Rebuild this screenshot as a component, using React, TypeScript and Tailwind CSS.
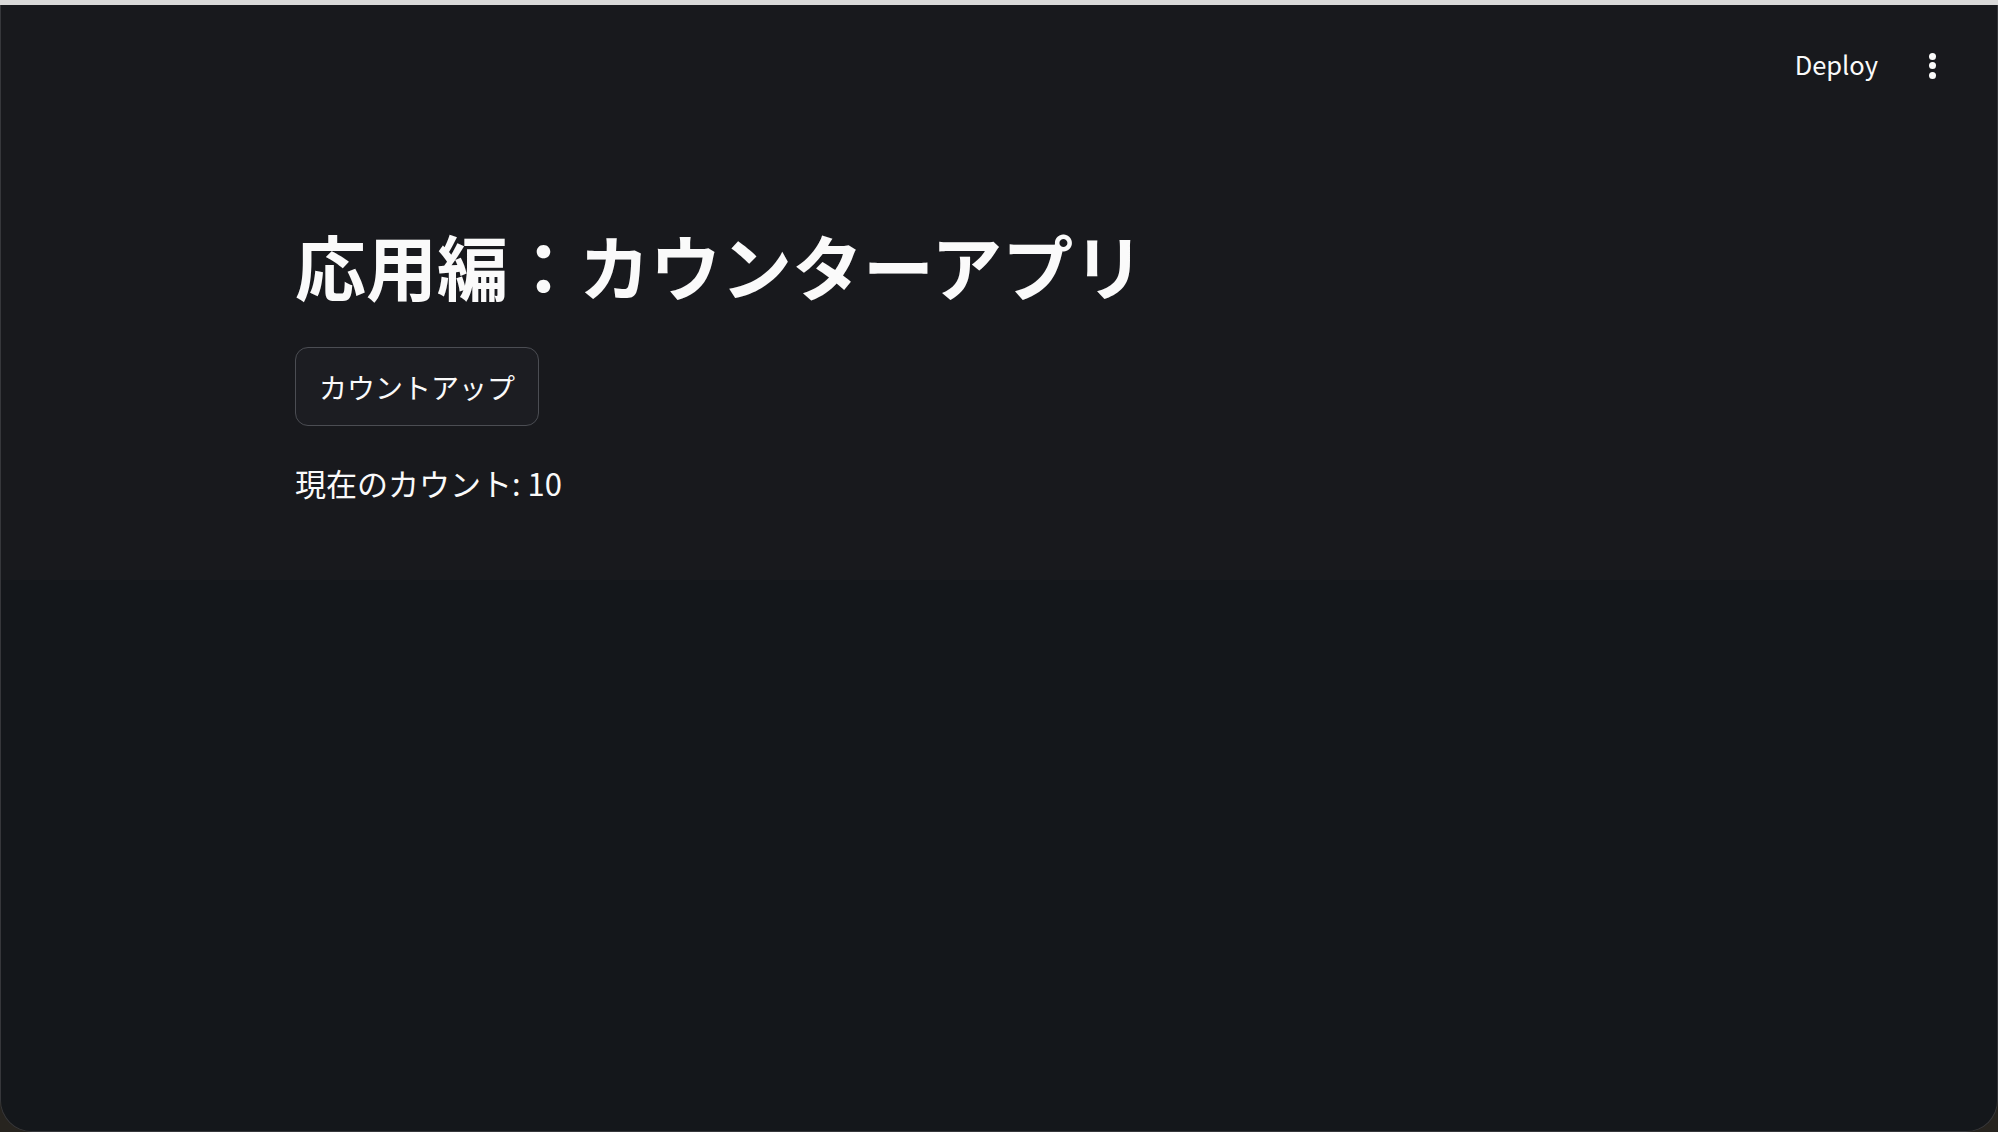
import { useState } from 'react';

const FONT = '"Noto Sans CJK JP", "Noto Sans", sans-serif';

export default function App() {
  const [count, setCount] = useState(10);

  return (
    <div
      className="w-[1998px] h-[1132px] flex flex-col overflow-hidden bg-[#27241f] text-[#fafafa]"
      style={{ fontFamily: FONT }}
    >
      {/* window chrome strip */}
      <div className="h-[5px] bg-[#d9d9d9]" />

      <div className="flex-1 flex flex-col overflow-hidden rounded-b-[32px] border-x border-b border-[#36373b]">
        <div className="h-[575px] bg-[#18191d] flex flex-col">
          {/* Header */}
          <div className="h-[121px] flex items-center justify-end pr-[61px]">
            <button className="mb-[3px] text-[25.5px] leading-none text-[#fafafa]">Deploy</button>
            <button className="ml-[51px] w-[7px] flex flex-col gap-[2.5px]">
              <span className="w-[7px] h-[7px] rounded-full bg-[#fafafa]" />
              <span className="w-[7px] h-[7px] rounded-full bg-[#fafafa]" />
              <span className="w-[7px] h-[7px] rounded-full bg-[#fafafa]" />
            </button>
          </div>

          {/* Main */}
          <div className="pl-[294px] pt-[96px] flex flex-col items-start">
            <h1 className="text-[71px] leading-[1.2] font-bold">応用編：カウンターアプリ</h1>
            <button
              onClick={() => setCount(count + 1)}
              className="mt-[40px] w-[244px] h-[79px] flex items-center justify-center rounded-[13px] border border-[#4b4d53] bg-[#1c1d22] text-[28px] leading-none"
            >
              カウントアップ
            </button>
            <p className="mt-[34px] text-[31px] leading-[1.5]">現在のカウント: {count}</p>
          </div>
        </div>
        <div className="flex-1 bg-[#14171b]" />
      </div>
    </div>
  );
}
